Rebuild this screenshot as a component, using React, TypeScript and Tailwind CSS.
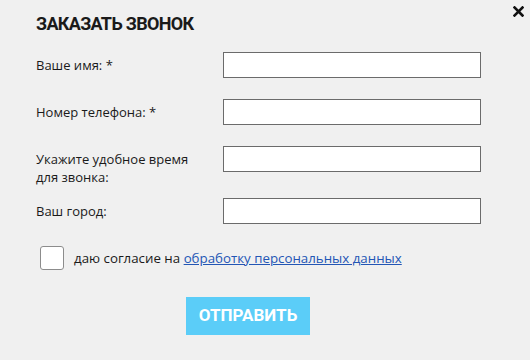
export default function App() {
  const rows = [
    { label: 'Ваше имя: *' },
    { label: 'Номер телефона: *' },
    { label: 'Укажите удобное время для звонка:' },
    { label: 'Ваш город:' },
  ]

  return (
    <div
      className="relative w-[530px] h-[360px] bg-[#f0f0f0] text-[#1a1a1a] pl-[36px] overflow-hidden"
      style={{ fontFamily: '"Open Sans", "Noto Sans", sans-serif' }}
    >
      {/* Close */}
      <button className="absolute right-[6px] top-[5px] w-[12px] h-[12px] flex items-center justify-center">
        <svg width="11" height="11" viewBox="0 0 11 11">
          <path d="M1.5 1.5 L9.5 9.5 M9.5 1.5 L1.5 9.5" stroke="#111" strokeWidth="2.6" strokeLinecap="square" />
        </svg>
      </button>

      <h2 className="pt-[11px] text-[18px] leading-[26px] font-bold tracking-[-0.7px] font-['Roboto',sans-serif]">ЗАКАЗАТЬ ЗВОНОК</h2>

      <div className="mt-[15px] flex flex-col">
        {rows.map((row, i) => (
          <div
            key={i}
            className={
              'flex items-start ' +
              (i === 0 ? '' : i === 3 ? 'mt-[12px]' : 'mt-[21px]')
            }
          >
            <label className="w-[187px] pt-[4px] pr-[20px] text-[13px] leading-[18px]">{row.label}</label>
            <input className="w-[258px] h-[26px] bg-white border border-[#6b6b6b] outline-none" />
          </div>
        ))}
      </div>

      {/* Consent */}
      <div className="mt-[22px] ml-[4px] flex items-center">
        <span className="w-[24px] h-[24px] bg-white border border-[#8c8c8c] rounded-[3px]" />
        <span className="ml-[10px] text-[13.3px] leading-[18px]">
          даю согласие на{' '}
          <a href="#" className="text-[#2356b5] underline">
            обработку персональных данных
          </a>
        </span>
      </div>

      <button className="mt-[27px] ml-[150px] w-[124px] h-[38px] bg-[#5bcdf8] text-white text-[17px] font-bold font-['Roboto',sans-serif]">
        ОТПРАВИТЬ
      </button>
    </div>
  )
}
